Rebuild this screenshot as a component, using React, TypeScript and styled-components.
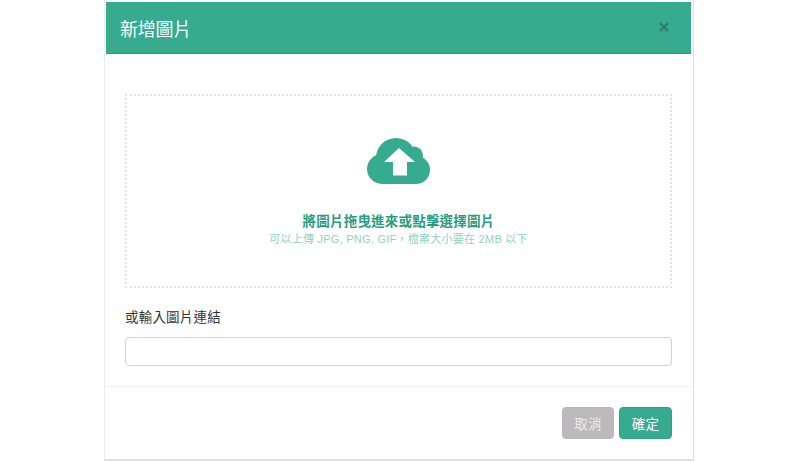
import { createGlobalStyle, styled } from "styled-components";

const Global = createGlobalStyle`
    html, body {
        margin: 0;
        padding: 0;
        background: #fff;
        font-family: "Liberation Sans", "Noto Sans CJK TC", sans-serif;
    }
`;

const Page = styled.div`
    width: 800px;
    height: 462px;
    overflow: hidden;
    display: flex;
    justify-content: center;
`;

const Modal = styled.div`
    box-sizing: border-box;
    width: 590px;
    height: 461px;
    margin-left: -2px;
    padding: 2px 2px 0 1px;
    background: #fff;
    border-left: 1px solid #eeeaee;
    border-right: 1px solid #e2dfe2;
    border-bottom: 2px solid #e2e0e2;
    display: flex;
    flex-direction: column;
`;

const Header = styled.div`
    box-sizing: border-box;
    height: 52px;
    padding: 0 22px 0 14px;
    display: flex;
    align-items: center;
    justify-content: space-between;
    background: #36ab8f;
    border-bottom: 1px solid #2a9d81;
`;

const Title = styled.h4`
    margin: 0;
    color: #fff;
    font-size: 18px;
    font-weight: 400;
    letter-spacing: -0.2px;
`;

const Close = styled.button`
    margin-bottom: 1px;
    padding: 0;
    border: 0;
    background: none;
    display: flex;
    color: #2a7a68;
`;

const Body = styled.div`
    padding: 40px 19px 20px 19px;
    display: flex;
    flex-direction: column;
`;

const Drop = styled.div`
    box-sizing: border-box;
    height: 194px;
    padding-top: 42px;
    border: 2px dotted #f0dcec;
    display: flex;
    flex-direction: column;
    align-items: center;
`;

const DropTitle = styled.div`
    margin-top: 29px;
    color: #279c80;
    font-size: 13.5px;
    line-height: 18px;
    font-weight: 700;
    letter-spacing: 0.2px;
`;

const DropHint = styled.div`
    color: #93d2c3;
    font-size: 11px;
    line-height: 16px;
    letter-spacing: 0.25px;
`;

const Label = styled.label`
    margin-top: 20px;
    color: #333;
    font-size: 13.5px;
    line-height: 19px;
    letter-spacing: 0.2px;
`;

const Input = styled.input`
    box-sizing: border-box;
    height: 29px;
    margin-top: 10px;
    border: 1px solid #d2d2d2;
    border-radius: 4px;
    background: #fff;
`;

const Footer = styled.div`
    padding: 20px 19px 0;
    border-top: 1px solid #efefef;
    display: flex;
    justify-content: flex-end;
    gap: 5px;
`;

const Button = styled.button<{ $primary?: boolean }>`
    box-sizing: border-box;
    width: ${(p) => (p.$primary ? "53px" : "52px")};
    height: 32px;
    padding: 0;
    border: 1px solid ${(p) => (p.$primary ? "#2ca387" : "#b9b7b9")};
    border-radius: 4px;
    background: ${(p) => (p.$primary ? "#36ab8f" : "#bbb9bb")};
    color: ${(p) => (p.$primary ? "#fff" : "#ececec")};
    font-family: inherit;
    font-size: 13.5px;
    letter-spacing: 0.2px;
`;

const CloudIcon = () => (
    <svg width="63" height="46" viewBox="0 0 63 46" aria-hidden="true">
        <g fill="#36ab8f">
            <circle cx="15" cy="31" r="15" />
            <circle cx="29" cy="20" r="20" />
            <circle cx="47" cy="17.500" r="9" />
            <circle cx="49" cy="32" r="14" />
            <rect x="15" y="20" width="34" height="26" />
        </g>
        <path fill="#fff" d="M32 10 48 24H40V37.500H26V24H17Z" />
    </svg>
);

const CloseIcon = () => (
    <svg width="10" height="10" viewBox="0 0 10 10" aria-hidden="true">
        <path d="M1 1 9 9M9 1 1 9" stroke="currentColor" strokeWidth="2" fill="none" />
    </svg>
);

const App = () => {
    return (
        <Page>
            <Global />
            <Modal>
                <Header>
                    <Title>新增圖片</Title>
                    <Close>
                        <CloseIcon />
                    </Close>
                </Header>
                <Body>
                    <Drop>
                        <CloudIcon />
                        <DropTitle>將圖片拖曳進來或點擊選擇圖片</DropTitle>
                        <DropHint>可以上傳 JPG, PNG, GIF，檔案大小要在 2MB 以下</DropHint>
                    </Drop>
                    <Label>或輸入圖片連結</Label>
                    <Input />
                </Body>
                <Footer>
                    <Button>取消</Button>
                    <Button $primary>確定</Button>
                </Footer>
            </Modal>
        </Page>
    );
};

export default App;
